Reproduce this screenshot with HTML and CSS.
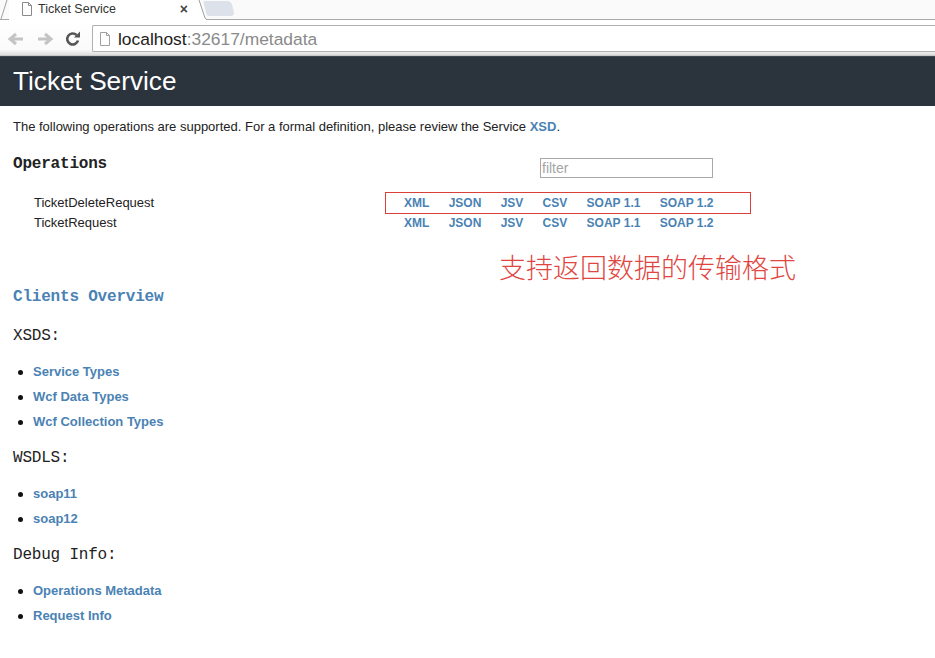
FILE: index.html
```html
<!DOCTYPE html>
<html lang="en">
<head>
<meta charset="utf-8">
<title>Ticket Service</title>
<link rel="stylesheet" href="styles.css">
</head>
<body>
<div class="tabstrip">
  <svg class="tab-edge" width="9" height="20" viewBox="0 0 9 20"><path d="M1 19L7 0" fill="none" stroke="#a0a0a0"/></svg>
  <div class="tab">
    <svg class="doc" width="12" height="14" viewBox="0 0 12 14"><path d="M1.5.5h6l3 3v10h-9zM7.5.5v3h3" fill="#fff" stroke="#8a8a8a"/></svg>
    <span class="tab-title">Ticket Service</span>
    <span class="tab-close">×</span>
  </div>
  <svg class="tab-edge" width="9" height="20" viewBox="0 0 9 20"><path d="M0 0h1l6 18q1 2 3 2H0z" fill="#fff"/><path d="M1 0l6 18q1 1.500 2 1.500" fill="none" stroke="#a0a0a0"/></svg>
  <div class="newtab"></div>
</div>
<div class="toolbar">
  <svg class="nav" width="18" height="14" viewBox="0 0 18 14"><path d="M16 7H4M9 2L3 7l6 5" fill="none" stroke="#c4c4c4" stroke-width="3"/></svg>
  <svg class="nav fwd" width="18" height="14" viewBox="0 0 18 14"><path d="M2 7h12M9 2l6 5-6 5" fill="none" stroke="#c4c4c4" stroke-width="3"/></svg>
  <svg class="nav reload" width="16" height="16" viewBox="0 0 16 16"><path d="M13 9.500A5.500 5.500 0 1 1 11.500 4" fill="none" stroke="#555" stroke-width="2.600"/><path d="M9 6.500h6v-6z" fill="#555"/></svg>
  <div class="omnibox">
    <svg class="doc" width="12" height="14" viewBox="0 0 12 14"><path d="M1.5.5h6l3 3v10h-9zM7.5.5v3h3" fill="#fff" stroke="#a0a0a0"/></svg>
    <span class="host">localhost</span><span class="path">:32617/metadata</span>
  </div>
</div>
<header class="site-header"><h1>Ticket Service</h1></header>
<main class="content">
  <p class="intro">The following operations are supported. For a formal definition, please review the Service <a href="#">XSD</a>.</p>
  <div class="ops-head">
    <h3>Operations</h3>
    <input class="filter" type="text" placeholder="filter">
  </div>
  <div class="ops">
    <div class="op">
      <span class="op-name">TicketDeleteRequest</span>
      <span class="formats"><a href="#">XML</a><a href="#">JSON</a><a href="#">JSV</a><a href="#">CSV</a><a href="#">SOAP 1.1</a><a href="#">SOAP 1.2</a></span>
    </div>
    <div class="op">
      <span class="op-name">TicketRequest</span>
      <span class="formats"><a href="#">XML</a><a href="#">JSON</a><a href="#">JSV</a><a href="#">CSV</a><a href="#">SOAP 1.1</a><a href="#">SOAP 1.2</a></span>
    </div>
  </div>
  <h3 class="clients"><a href="#">Clients Overview</a></h3>
  <h4>XSDS:</h4>
  <ul>
    <li><a href="#">Service Types</a></li>
    <li><a href="#">Wcf Data Types</a></li>
    <li><a href="#">Wcf Collection Types</a></li>
  </ul>
  <h4>WSDLS:</h4>
  <ul>
    <li><a href="#">soap11</a></li>
    <li><a href="#">soap12</a></li>
  </ul>
  <h4>Debug Info:</h4>
  <ul>
    <li><a href="#">Operations Metadata</a></li>
    <li><a href="#">Request Info</a></li>
  </ul>
</main>
<div class="note-box"></div>
<div class="note-text">支持返回数据的传输格式</div>
</body>
</html>
```
FILE: styles.css
```css
* { box-sizing: border-box; }
html, body { margin: 0; padding: 0; background: #fff; overflow: hidden; }
body { width: 935px; height: 658px; position: relative; font-family: "Liberation Sans", Arial, sans-serif; font-size: 13px; color: #222; }
a { color: #4a82b4; text-decoration: none; font-weight: bold; }

.tabstrip { height: 20px; background: #fafafa; border-bottom: 1px solid #a9a9a9; display: flex; align-items: flex-start; }
.tab-edge { flex: none; display: block; }
.tab { width: 189px; height: 20px; padding-left: 12px; display: flex; align-items: center; background: #fff; }
.tab .doc { margin-right: 5px; margin-top: -2px; flex: none; }
.tab-title { font-size: 12.5px; color: #333; flex: 1; margin-top: -3px; }
.tab-close { font-size: 14px; font-weight: bold; color: #444; margin-right: 10px; margin-top: -3px; }
.newtab { width: 28px; height: 15px; margin-left: -2px; margin-top: 1px; background: #dde1e9; border-radius: 2px 4px 4px 2px; transform: skewX(14deg); }

.toolbar { height: 36px; display: flex; align-items: center; padding-left: 7px; background: linear-gradient(#fff, #fafafa 85%, #dcdcdc); border-bottom: 1px solid #c8c8c8; }
.nav { flex: none; margin-top: 2px; }
.fwd { margin-left: 11px; }
.reload { margin-left: 11px; }
.omnibox { margin-left: 11px; width: 850px; height: 27px; margin-top: 2px; padding-top: 1px; background: #fff; border: 1px solid #b0b0b0; border-right: 0; border-radius: 2px 0 0 2px; display: flex; align-items: center; padding-left: 6px; font-size: 17.4px; }
.omnibox .doc { margin-right: 7px; flex: none; }
.host { color: #222; }
.path { color: #8a8a8a; }

.site-header { height: 50px; background: #2b333d; border-top: 1px solid #3d4650; display: flex; align-items: center; padding-left: 13px; }
h1 { margin: 0; font-size: 26.2px; font-weight: normal; color: #fff; }

.content { padding: 14px 0 0 13px; }
.intro { margin: 0; line-height: 14px; }
h3, h4 { font-family: "Liberation Mono", "Noto Sans CJK SC", monospace; margin: 0; color: #222; }
h3 { font-size: 16px; letter-spacing: -0.2px; line-height: 18px; }
.ops-head { display: flex; align-items: flex-start; margin-top: 21px; height: 38px; }
.ops-head h3 { width: 527px; font-weight: bold; }
.filter { width: 173px; height: 20px; margin-top: 3px; padding: 0 1px; border: 1px solid #a8a8a8; font: 14px "Liberation Sans", Arial, sans-serif; color: #333; border-radius: 0; outline: 0; }
.filter::placeholder { color: #a5a5a5; opacity: 1; }
.ops { padding-left: 21px; }
.op { display: flex; height: 20px; align-items: center; }
.op-name { width: 370px; color: #222; margin-top: -2px; }
.formats { display: flex; gap: 19.3px; font-size: 12px; }
.clients { margin-top: 55px; }
h4 { font-size: 16px; font-weight: normal; letter-spacing: -0.2px; line-height: 18px; margin-top: 21px; }
ul { margin: 17px 0 0; padding: 0 0 0 5px; list-style: none; }
li { height: 25px; line-height: 20px; display: flex; align-items: flex-start; }
li::before { content: ""; width: 5px; height: 5px; margin: 8px 10px 0 0; border-radius: 50%; background: #111; flex: none; }
ul + h4 { margin-top: 12px; }

.note-box { position: absolute; left: 385px; top: 192px; width: 366px; height: 22px; border: 1px solid #d9403a; }
.note-text { position: absolute; left: 499px; top: 250px; font-family: "Noto Sans CJK SC", sans-serif; font-size: 27px; line-height: 34px; color: #e0453f; font-weight: 300; white-space: nowrap; }
```
